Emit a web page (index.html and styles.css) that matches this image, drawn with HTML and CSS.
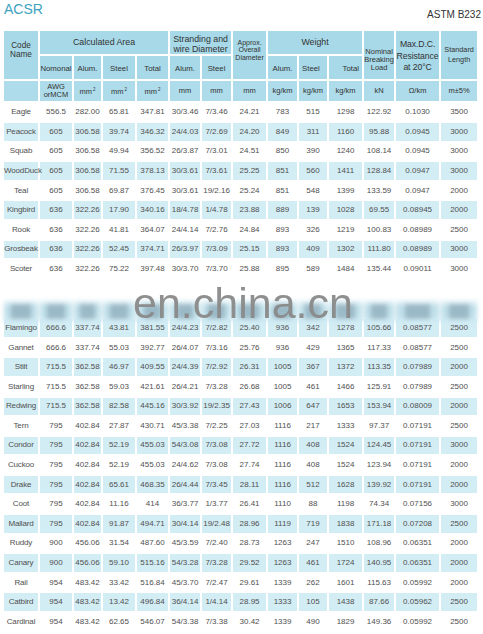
FILE: index.html
```html
<!DOCTYPE html>
<html>
<head>
<meta charset="utf-8">
<link rel="stylesheet" href="styles.css">
</head>
<body>
<div class="top">
  <div class="title">ACSR</div>
  <div class="std">ASTM B232</div>
</div>
<table class="spec">
  <colgroup>
    <col class="c1"><col class="c2"><col class="c3"><col class="c4"><col class="c5"><col class="c6"><col class="c7">
    <col class="c8"><col class="c9"><col class="c10"><col class="c11"><col class="c12"><col class="c13"><col class="c14">
  </colgroup>
  <thead>
    <tr class="h1">
      <th rowspan="2" class="code">Code<br>Name</th>
      <th colspan="4" class="big">Calculated Area</th>
      <th colspan="2" class="big two">Stranding and<br>wire Diameter</th>
      <th rowspan="2" class="approx">Approx.<br>Overall<br>Diameter</th>
      <th colspan="3" class="big">Weight</th>
      <th rowspan="2" class="load">Nominal<br>Breaking<br>Load</th>
      <th rowspan="2" class="res">Max.D.C.<br>Resistance<br>at 20°C</th>
      <th rowspan="2" class="len">Standard<br>Length</th>
    </tr>
    <tr class="h2">
      <th>Nomonal</th><th>Alum.</th><th>Steel</th><th>Total</th>
      <th>Alum.</th><th>Steel</th>
      <th>Alum.</th><th class="lft">Steel</th><th class="rgt">Total</th>
    </tr>
    <tr class="h3">
      <th></th><th class="awg">AWG<br>orMCM</th>
      <th>mm<sup>2</sup></th><th>mm<sup>2</sup></th><th>mm<sup>2</sup></th>
      <th>mm</th><th>mm</th><th>mm</th>
      <th>kg/km</th><th>kg/km</th><th>kg/km</th>
      <th>kN</th><th>Ω/km</th><th>m±5%</th>
    </tr>
  </thead>
  <tbody>
    <tr><td>Eagle</td><td>556.5</td><td>282.00</td><td>65.81</td><td>347.81</td><td>30/3.46</td><td>7/3.46</td><td>24.21</td><td>783</td><td>515</td><td>1298</td><td>122.92</td><td>0.1030</td><td>3500</td></tr>
    <tr class="b"><td>Peacock</td><td>605</td><td>306.58</td><td>39.74</td><td>346.32</td><td>24/4.03</td><td>7/2.69</td><td>24.20</td><td>849</td><td>311</td><td>1160</td><td>95.88</td><td>0.0945</td><td>3000</td></tr>
    <tr><td>Squab</td><td>605</td><td>306.58</td><td>49.94</td><td>356.52</td><td>26/3.87</td><td>7/3.01</td><td>24.51</td><td>850</td><td>390</td><td>1240</td><td>108.14</td><td>0.0945</td><td>3000</td></tr>
    <tr class="b"><td>WoodDuck</td><td>605</td><td>306.58</td><td>71.55</td><td>378.13</td><td>30/3.61</td><td>7/3.61</td><td>25.25</td><td>851</td><td>560</td><td>1411</td><td>128.84</td><td>0.0947</td><td>3000</td></tr>
    <tr><td>Teal</td><td>605</td><td>306.58</td><td>69.87</td><td>376.45</td><td>30/3.61</td><td>19/2.16</td><td>25.24</td><td>851</td><td>548</td><td>1399</td><td>133.59</td><td>0.0947</td><td>2000</td></tr>
    <tr class="b"><td>Kingbird</td><td>636</td><td>322.26</td><td>17.90</td><td>340.16</td><td>18/4.78</td><td>1/4.78</td><td>23.88</td><td>889</td><td>139</td><td>1028</td><td>69.55</td><td>0.08945</td><td>2000</td></tr>
    <tr><td>Rook</td><td>636</td><td>322.26</td><td>41.81</td><td>364.07</td><td>24/4.14</td><td>7/2.76</td><td>24.84</td><td>893</td><td>326</td><td>1219</td><td>100.83</td><td>0.08989</td><td>2500</td></tr>
    <tr class="b"><td>Grosbeak</td><td>636</td><td>322.26</td><td>52.45</td><td>374.71</td><td>26/3.97</td><td>7/3.09</td><td>25.15</td><td>893</td><td>409</td><td>1302</td><td>111.80</td><td>0.08989</td><td>3000</td></tr>
    <tr><td>Scoter</td><td>636</td><td>322.26</td><td>75.22</td><td>397.48</td><td>30/3.70</td><td>7/3.70</td><td>25.88</td><td>895</td><td>589</td><td>1484</td><td>135.44</td><td>0.09011</td><td>3000</td></tr>
    <tr class="gap"><td colspan="14"></td></tr>
    <tr class="b"><td>Flamingo</td><td>666.6</td><td>337.74</td><td>43.81</td><td>381.55</td><td>24/4.23</td><td>7/2.82</td><td>25.40</td><td>936</td><td>342</td><td>1278</td><td>105.66</td><td>0.08577</td><td>2500</td></tr>
    <tr><td>Gannet</td><td>666.6</td><td>337.74</td><td>55.03</td><td>392.77</td><td>26/4.07</td><td>7/3.16</td><td>25.76</td><td>936</td><td>429</td><td>1365</td><td>117.33</td><td>0.08577</td><td>2500</td></tr>
    <tr class="b"><td>Stilt</td><td>715.5</td><td>362.58</td><td>46.97</td><td>409.55</td><td>24/4.39</td><td>7/2.92</td><td>26.31</td><td>1005</td><td>367</td><td>1372</td><td>113.35</td><td>0.07989</td><td>2000</td></tr>
    <tr><td>Starling</td><td>715.5</td><td>362.58</td><td>59.03</td><td>421.61</td><td>26/4.21</td><td>7/3.28</td><td>26.68</td><td>1005</td><td>461</td><td>1466</td><td>125.91</td><td>0.07989</td><td>2500</td></tr>
    <tr class="b"><td>Redwing</td><td>715.5</td><td>362.58</td><td>82.58</td><td>445.16</td><td>30/3.92</td><td>19/2.35</td><td>27.43</td><td>1006</td><td>647</td><td>1653</td><td>153.94</td><td>0.08009</td><td>2000</td></tr>
    <tr><td>Tern</td><td>795</td><td>402.84</td><td>27.87</td><td>430.71</td><td>45/3.38</td><td>7/2.25</td><td>27.03</td><td>1116</td><td>217</td><td>1333</td><td>97.37</td><td>0.07191</td><td>2500</td></tr>
    <tr class="b"><td>Condor</td><td>795</td><td>402.84</td><td>52.19</td><td>455.03</td><td>54/3.08</td><td>7/3.08</td><td>27.72</td><td>1116</td><td>408</td><td>1524</td><td>124.45</td><td>0.07191</td><td>3000</td></tr>
    <tr><td>Cuckoo</td><td>795</td><td>402.84</td><td>52.19</td><td>455.03</td><td>24/4.62</td><td>7/3.08</td><td>27.74</td><td>1116</td><td>408</td><td>1524</td><td>123.94</td><td>0.07191</td><td>2000</td></tr>
    <tr class="b"><td>Drake</td><td>795</td><td>402.84</td><td>65.61</td><td>468.35</td><td>26/4.44</td><td>7/3.45</td><td>28.11</td><td>1116</td><td>512</td><td>1628</td><td>139.92</td><td>0.07191</td><td>2000</td></tr>
    <tr><td>Coot</td><td>795</td><td>402.84</td><td>11.16</td><td>414</td><td>36/3.77</td><td>1/3.77</td><td>26.41</td><td>1110</td><td>88</td><td>1198</td><td>74.34</td><td>0.07156</td><td>3000</td></tr>
    <tr class="b"><td>Mallard</td><td>795</td><td>402.84</td><td>91.87</td><td>494.71</td><td>30/4.14</td><td>19/2.48</td><td>28.96</td><td>1119</td><td>719</td><td>1838</td><td>171.18</td><td>0.07208</td><td>2500</td></tr>
    <tr><td>Ruddy</td><td>900</td><td>456.06</td><td>31.54</td><td>487.60</td><td>45/3.59</td><td>7/2.40</td><td>28.73</td><td>1263</td><td>247</td><td>1510</td><td>108.96</td><td>0.06351</td><td>2000</td></tr>
    <tr class="b"><td>Canary</td><td>900</td><td>456.06</td><td>59.10</td><td>515.16</td><td>54/3.28</td><td>7/3.28</td><td>29.52</td><td>1263</td><td>461</td><td>1724</td><td>140.95</td><td>0.06351</td><td>2000</td></tr>
    <tr><td>Rail</td><td>954</td><td>483.42</td><td>33.42</td><td>516.84</td><td>45/3.70</td><td>7/2.47</td><td>29.61</td><td>1339</td><td>262</td><td>1601</td><td>115.63</td><td>0.05992</td><td>2000</td></tr>
    <tr class="b"><td>Catbird</td><td>954</td><td>483.42</td><td>13.42</td><td>496.84</td><td>36/4.14</td><td>1/4.14</td><td>28.95</td><td>1333</td><td>105</td><td>1438</td><td>87.66</td><td>0.05962</td><td>2500</td></tr>
    <tr><td>Cardinal</td><td>954</td><td>483.42</td><td>62.65</td><td>546.07</td><td>54/3.38</td><td>7/3.38</td><td>30.42</td><td>1339</td><td>490</td><td>1829</td><td>149.36</td><td>0.05992</td><td>2500</td></tr>
  </tbody>
</table>
<div class="band" aria-hidden="true">
  <span></span><span></span><span></span><span></span><span></span><span></span><span></span>
  <span></span><span></span><span></span><span></span><span></span><span></span><span></span>
</div>
<div class="wm">en.china.cn</div>
</body>
</html>
```
FILE: styles.css
```css
html, body {
  margin: 0;
  padding: 0;
  background: #fff;
}
body {
  position: relative;
  width: 483px;
  height: 634px;
  overflow: hidden;
  font-family: "Liberation Sans", Arial, sans-serif;
}
.top {
  display: flex;
  justify-content: space-between;
  align-items: flex-start;
  height: 28.6px;
}
.title {
  font-size: 14px;
  line-height: 14px;
  color: #3ea2be;
  padding: 2px 0 0 4px;
}
.std {
  font-size: 10px;
  line-height: 10px;
  color: #333;
  margin-top: 9.5px;
  padding-right: 2px;
}
.spec {
  margin-left: 2px;
  width: 477px;
  table-layout: fixed;
  border-collapse: separate;
  border-spacing: 2px;
}
.c1 { width: 34px; }
.c2 { width: 32px; }
.c3 { width: 27px; }
.c4 { width: 32px; }
.c5 { width: 31px; }
.c6 { width: 30px; }
.c7 { width: 29px; }
.c8 { width: 33px; }
.c9 { width: 29px; }
.c10 { width: 28px; }
.c11 { width: 33px; }
.c12 { width: 30px; }
.c13 { width: 43px; }
.c14 { width: 36px; }

.spec th,
.spec td {
  box-sizing: border-box;
  padding: 0;
  text-align: center;
  vertical-align: middle;
  white-space: nowrap;
  overflow: visible;
}
.spec th {
  background: #a7d9e8;
  color: #333;
  font-weight: normal;
}
.h1 th { height: 23.4px; }
.h2 th { height: 23px; font-size: 7.8px; line-height: 9px; padding-top: 3px; }
.h3 th { height: 20.5px; font-size: 7.5px; line-height: 8px; background: #aedcea; }
.h3 sup { font-size: 4.5px; vertical-align: 3px; margin-left: 1px; }
.big { font-size: 8.8px; line-height: 10px; }
.two { padding-top: 3px !important; }
.code { font-size: 8.2px; line-height: 8.5px; padding-bottom: 8px !important; }
.approx { font-size: 7px; line-height: 7.5px; padding-bottom: 10px !important; }
.load { font-size: 7.5px; line-height: 8px; padding-top: 10px !important; }
.res { font-size: 8.7px; line-height: 11.5px; padding-top: 3px !important; letter-spacing: -0.1px; }
.len { font-size: 7.3px; line-height: 9.5px; }
.h2 .lft { text-align: left; padding-left: 3px; }
.h2 .rgt { text-align: right; padding-right: 3px; }

.spec td {
  height: 17.6px;
  font-size: 8px;
  line-height: 10px;
  color: #505050;
}
.spec td:first-child { letter-spacing: -0.15px; }
.spec tr.b td { background: #d3edf5; }
.spec tr.gap td { height: 37.3px; background: #fff; }

.band {
  position: absolute;
  left: 4px;
  top: 300px;
  width: 475px;
  height: 22px;
  display: grid;
  grid-template-columns: 34px 32px 27px 32px 31px 30px 29px 33px 29px 28px 33px 30px 43px 36px;
  column-gap: 2px;
  filter: blur(2.2px);
}
.band span {
  position: relative;
  background: linear-gradient(#eef7fa, #bcdde8 35%, #c3e2ec 80%, #d3edf5);
}
.band span::after {
  content: "";
  position: absolute;
  left: 22%;
  right: 22%;
  top: 4px;
  bottom: 3px;
  background: rgba(110, 140, 155, 0.45);
}
.wm {
  position: absolute;
  left: 133px;
  top: 286px;
  font-size: 43px;
  line-height: 34px;
  color: #8a8a8a;
  opacity: 0.95;
  white-space: nowrap;
}
```
